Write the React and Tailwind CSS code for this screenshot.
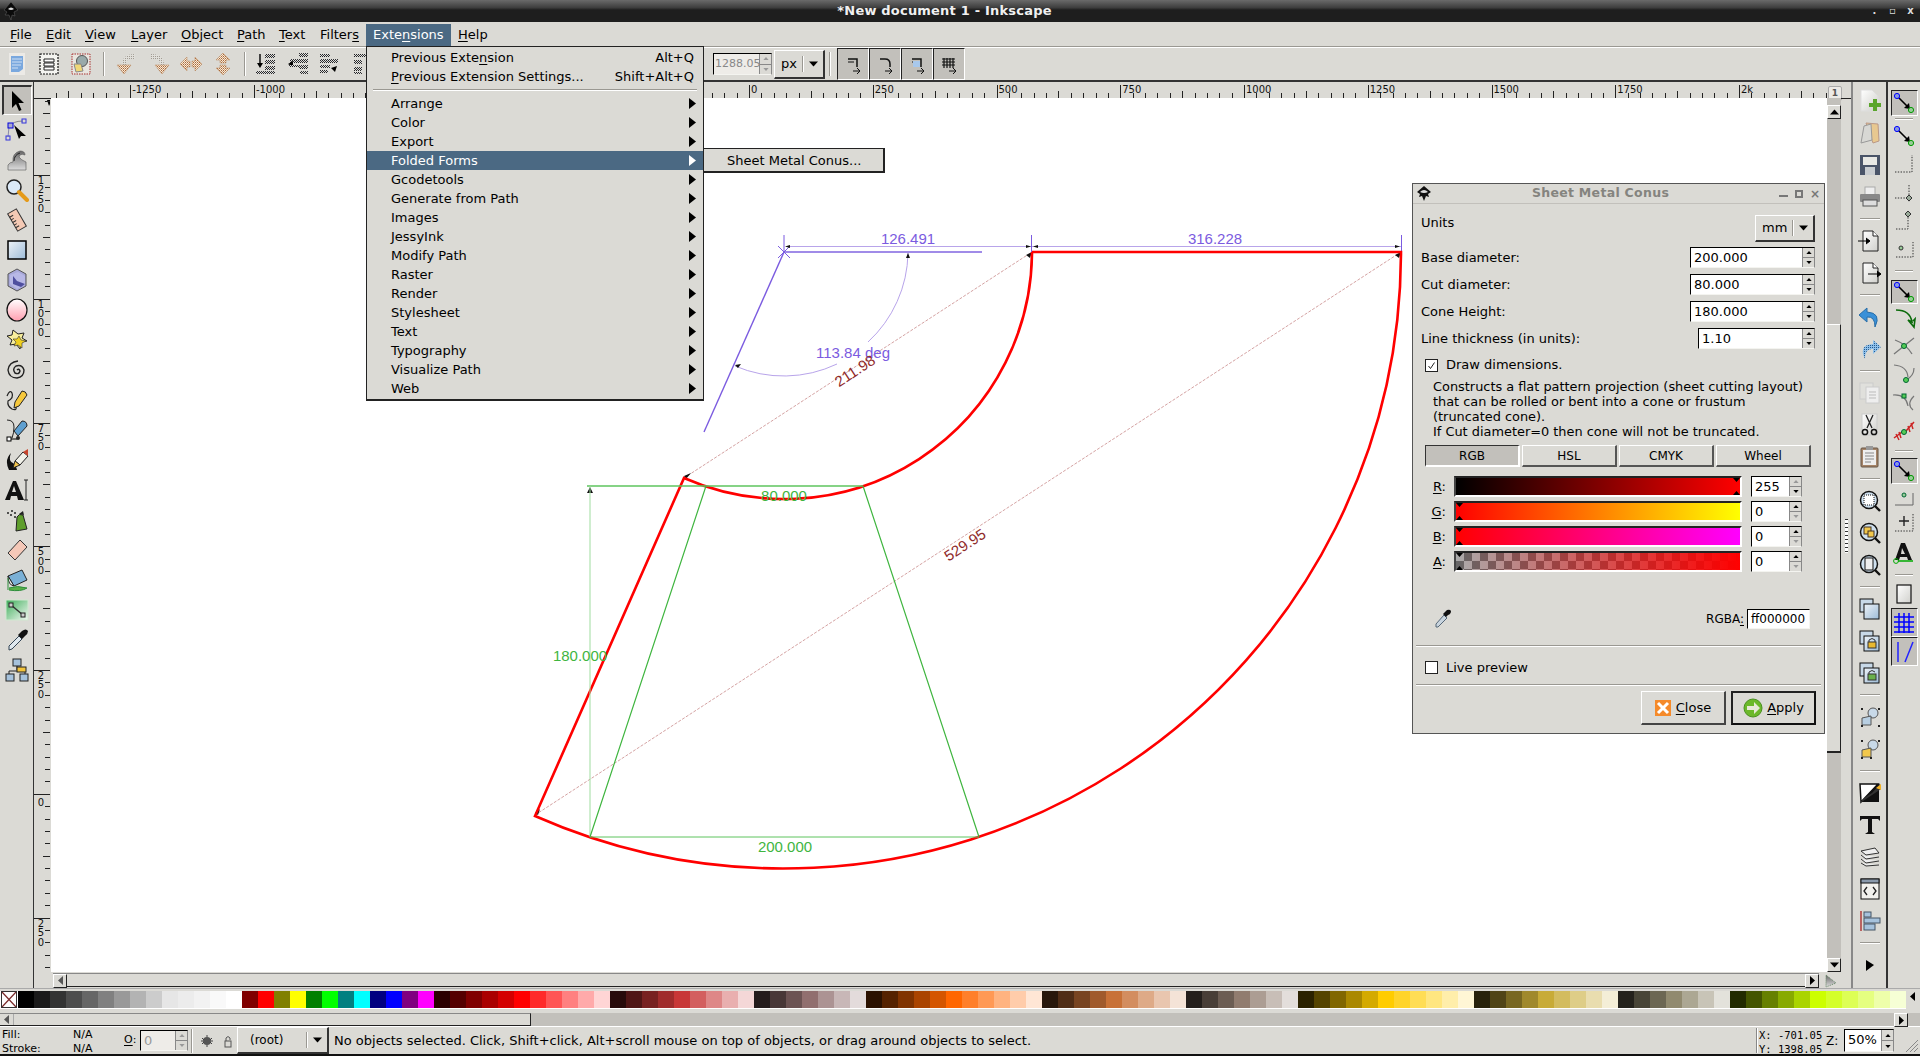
import React from "react";

const F = "font-['DejaVu_Sans',sans-serif]";
const I = ({ children, s = 24 }) => (
  <svg width={s} height={s} viewBox="0 0 24 24" className="block shrink-0">{children}</svg>
);

const Defs = () => (
  <svg className="absolute w-0 h-0">
    <defs>
      <linearGradient id="gBlue" x1="0" y1="0" x2="1" y2="1"><stop offset="0" stopColor="#eef3f8" /><stop offset="1" stopColor="#9dbcd8" /></linearGradient>
      <linearGradient id="gPink" x1="0" y1="0" x2="0" y2="1"><stop offset="0" stopColor="#fff" /><stop offset="1" stopColor="#ff9fb0" /></linearGradient>
      <linearGradient id="gGreen" x1="0" y1="0" x2="1" y2="1"><stop offset="0" stopColor="#3fae5b" /><stop offset="1" stopColor="#f2f8f2" /></linearGradient>
      <linearGradient id="gGray" x1="0" y1="0" x2="0" y2="1"><stop offset="0" stopColor="#666" /><stop offset="1" stopColor="#ddd" /></linearGradient>
      <linearGradient id="gPage" x1="0" y1="0" x2="1" y2="1"><stop offset="0" stopColor="#fff" /><stop offset="1" stopColor="#d0d0cc" /></linearGradient>
      <pattern id="hatch" width="2" height="2" patternUnits="userSpaceOnUse"><rect width="2" height="2" fill="#f7ead9" /><rect width="1" height="1" fill="#a9683a" /><rect x="1" y="1" width="1" height="1" fill="#c99a72" /></pattern>
      <pattern id="hatchG" width="2" height="2" patternUnits="userSpaceOnUse"><rect width="2" height="2" fill="#e0dfda" /><rect width="1" height="1" fill="#a09a92" /></pattern>
      <pattern id="hatchK" width="2" height="2" patternUnits="userSpaceOnUse"><rect width="2" height="2" fill="#ddd" /><rect width="1" height="1" fill="#222" /><rect x="1" y="1" width="1" height="1" fill="#333" /></pattern>
      <pattern id="hatchBlue" width="2" height="2" patternUnits="userSpaceOnUse"><rect width="2" height="2" fill="#8fc0ea" /><rect width="1" height="1" fill="#22598f" /></pattern>
    </defs>
  </svg>
);

const Arrow = () => <path d="M7 2 L7 19 L11 15 L14 22 L16.5 21 L13.5 14 L19 14 Z" fill="#000" />;

const tools = [
  <I><Arrow /></I>,
  <I><path d="M5 9 Q7 3 18 3" fill="none" stroke="#888" /><path d="M4 9 L3 19" stroke="#88a" /><path d="M9 7 L21 18 L16 18 L14 21 Z" fill="#000" /><rect x="3" y="5" width="5" height="5" fill="#aac" stroke="#00d" /><rect x="17" y="1" width="4" height="4" fill="none" stroke="#33d" /><rect x="1" y="18" width="4" height="4" fill="none" stroke="#33d" /></I>,
  <I><path d="M3 22 L3 17 Q5 14 8 14 Q7 5 15 3 Q20 3 20 7 Q15 5 14 9 Q16 12 21 14 L21 22 Z" fill="url(#gGray)" stroke="#555" strokeWidth=".6" /><path d="M9 13 Q9 7 15 5" fill="none" stroke="#222" /></I>,
  <I><circle cx="9" cy="9" r="7" fill="#dbe9f7" stroke="#222" strokeWidth="1.5" /><path d="M14 14 L22 22" stroke="#e59a18" strokeWidth="4" strokeLinecap="round" /></I>,
  <I><g transform="rotate(-30 12 12)"><rect x="7" y="2" width="10" height="20" fill="#f4c9b4" stroke="#333" /><path d="M7 6h4M7 9h3M7 12h4M7 15h3M7 18h4" stroke="#333" /></g></I>,
  <I><rect x="3" y="3" width="18" height="18" fill="url(#gBlue)" stroke="#000" strokeWidth="1.5" /></I>,
  <I><path d="M12 1 L21 6 L21 18 L12 23 L3 18 L3 6 Z" fill="#a8a8d8" stroke="#555" /><path d="M5 7 L13 4 L20 8 L20 17 L12 21 L5 16 Z" fill="#b8b8e6" /><path d="M8 8 L8 16 L16 19 L20 16 L12 13 Z" fill="#4f4f9f" /></I>,
  <I><ellipse cx="12" cy="12" rx="10" ry="11" fill="url(#gPink)" stroke="#111" strokeWidth="1.2" /></I>,
  <I><path d="M8 2 L13 6 L19 5 L17 10 L22 13 L16 14 L15 21 L11 16 L5 17 L7 12 L2 8 L7 7 Z" fill="#f8ee9c" stroke="#222" /><path d="M14 8 L16 12 L21 13 L17 15 L17 20 L13 17 L9 18 L11 14 L8 11 L12 11 Z" fill="#f0d020" stroke="#333" strokeWidth=".6" /></I>,
  <I><path d="M12 12 Q14 10 15 13 Q14 17 10 15 Q7 11 11 8 Q17 6 19 12 Q19 19 12 20 Q4 20 3 12 Q4 4 13 3" fill="none" stroke="#222" strokeWidth="1.4" /></I>,
  <I><path d="M10 14 L17 3 Q21 3 22 7 L14 18 L9 20 Z" fill="#f6c83c" stroke="#222" /><path d="M2 8 Q5 1 7 5 Q9 10 3 13 Q2 18 7 21 Q12 23 11 19" fill="none" stroke="#222" strokeWidth="1.2" /></I>,
  <I><path d="M2 2 Q9 2 9 9 Q9 15 7 20" fill="none" stroke="#222" /><path d="M9 13 L17 3 Q22 3 22 8 L13 18 Z" fill="#5e9fd0" stroke="#222" /><rect x="2" y="19" width="4" height="4" fill="#fff" stroke="#000" /><path d="M6 21 L12 21" stroke="#000" /><circle cx="13" cy="20" r="2" fill="#222" /></I>,
  <I><path d="M4 22 Q-1 12 6 5 Q3 13 8 15 Q11 17 12 22 Z" fill="#111" /><path d="M10 13 L18 4 L23 8 L15 17 Z" fill="#f2f2ea" stroke="#222" /><path d="M18 4 L23 1 L23 8 Z" fill="#c8442c" /><path d="M10 13 L8 20 L15 17 Z" fill="#f3c64e" stroke="#222" /></I>,
  <I><path d="M8 3 L11 3 L19 22 L13 22 L12 18 L6 18 L5 22 L0 22 Z M9 8 L7 14 L11 14 Z" fill="#111" fillRule="evenodd" /><path d="M19 2 L23 2 M21 2 L21 22 M19 22 L23 22" stroke="#222" /></I>,
  <I><path d="M12 9 Q14 5 18 7 L22 21 L11 23 Z" fill="#5f9e2c" stroke="#222" /><path d="M14 6 L18 3 L19 7 Z" fill="#222" /><circle cx="3" cy="5" r="1" fill="#222" /><circle cx="7" cy="3" r="1" fill="#222" /><circle cx="6" cy="7" r="1" fill="#222" /><circle cx="10" cy="5" r="1" fill="#222" /><circle cx="10" cy="9" r="1" fill="#222" /></I>,
  <I><path d="M3 15 L15 2 L22 9 L10 22 Z" fill="#f4c8b8" stroke="#333" /></I>,
  <I><path d="M3 8 L17 2 L22 12 L9 18 Z" fill="#7ab0d6" stroke="#222" /><path d="M3 8 L9 18 Q3 17 3 8" fill="#eee" stroke="#222" /><path d="M3 10 L3 22 M4 20 Q12 17 22 20 Q16 24 4 22" stroke="#2d8e3c" fill="#5ab048" /></I>,
  <I><rect x="1" y="2" width="22" height="20" fill="url(#gGreen)" stroke="#cfe8cf" /><path d="M6 7 L18 17" stroke="#333" strokeWidth="1.5" /><rect x="4" y="5" width="4" height="4" fill="#ccc" stroke="#222" /><rect x="16" y="15" width="4" height="4" fill="#ccc" stroke="#222" /></I>,
  <I><path d="M4 22 L4 18 L14 8 L17 11 L7 21 Z" fill="#dfe8ee" stroke="#345" /><path d="M13 7 L17 3 Q21 0 23 3 Q23 6 20 8 L17 11 Z" fill="#111" /></I>,
  <I><path d="M12 8 L12 12 M4 17 L4 13 L20 13 L20 17" stroke="#222" fill="none" /><rect x="8" y="1" width="8" height="7" fill="#a6c2dc" stroke="#222" /><rect x="12" y="9" width="9" height="5" fill="#f2c33c" stroke="#222" /><rect x="1" y="16" width="8" height="7" fill="#a6c2dc" stroke="#222" /><rect x="15" y="16" width="8" height="7" fill="#a6c2dc" stroke="#222" /></I>,
];

const SnapBase = () => (
  <>
    <path d="M6 6 L16 16" stroke="#000" strokeWidth="1.6" /><path d="M18 18 L12 17 L17 12 Z" fill="#000" />
    <circle cx="5" cy="5" r="2.6" fill="#8899dd" stroke="#00f" /><circle cx="19" cy="19" r="2.6" fill="#9c9" stroke="#090" />
  </>
);
const Dot = ({ d }) => <path d={d} fill="none" stroke="#333" strokeDasharray="1.4 1.4" />;
const s = {
  main: <I><SnapBase /></I>,
  bbox: <I><Dot d="M3 20 L20 20 L20 3" /></I>,
  edge: <I><Dot d="M3 18 L17 18 M17 5 L17 22" /><path d="M17 15 L20 18 L17 21 L14 18 Z" fill="#9a9" stroke="#333" /></I>,
  mid: <I><Dot d="M4 21 L16 21 L16 8" /><path d="M16 3 L19 6 L16 9 L13 6 Z" fill="#9a9" stroke="#333" /></I>,
  cen: <I><Dot d="M4 21 L21 21 L21 6" /><circle cx="9" cy="12" r="2" fill="#9c9" stroke="#333" /></I>,
  path: <I><path d="M4 4 Q18 4 20 16 L16 14 L22 21 L23 13 L21 15" fill="none" stroke="#0a6a0a" strokeWidth="1.6" /></I>,
  inter: <I><path d="M2 20 L22 4 M3 6 Q14 10 20 20" fill="none" stroke="#777" strokeWidth="1.3" /><circle cx="12" cy="12" r="2.5" fill="#5c5" stroke="#063" /></I>,
  cusp: <I><path d="M2 3 Q15 4 16 15 M22 6 Q22 14 14 18" fill="none" stroke="#777" strokeWidth="1.2" /><circle cx="14" cy="18" r="2.5" fill="#5c5" stroke="#063" /></I>,
  smooth: <I><path d="M1 5 Q14 4 16 16 M22 6 Q14 14 21 20" fill="none" stroke="#777" strokeWidth="1.2" /><rect x="10" y="4" width="4" height="4" fill="#5c5" stroke="#063" /></I>,
  mids: <I><path d="M2 20 L10 14 M14 13 L22 4" stroke="#c22" strokeWidth="1.5" /><path d="M4 16 L7 22 M7 14 L9 20 M16 8 L18 14 M19 5 L21 11" stroke="#c22" strokeWidth="1.4" /><circle cx="12" cy="14" r="2.5" fill="#5c5" stroke="#063" /></I>,
  obj: <I><path d="M3 20 L21 20 L21 8" stroke="#666" fill="none" /><circle cx="12" cy="10" r="2" fill="#9c9" stroke="#063" /></I>,
  rot: <I><Dot d="M3 20 L21 20 L21 3" /><path d="M12 5 L12 15 M7 10 L17 10" stroke="#222" strokeWidth="1.4" /></I>,
  txt: <I><path d="M9 2 L13 2 L20 19 L16 19 L15 16 L8 16 L7 19 L3 19 Z M10 7 L9 13 L13 13 Z" fill="#111" fillRule="evenodd" /><path d="M6 20 L21 20" stroke="#0a0" strokeWidth="1.5" /><circle cx="4" cy="20" r="2.4" fill="none" stroke="#0a0" /></I>,
  page: <I><rect x="5" y="3" width="14" height="18" fill="url(#gPage)" stroke="#111" strokeWidth="1.2" /></I>,
  grid: <I><path d="M7 2v20M12 2v20M17 2v20M2 6h20M2 11h20M2 16h20M2 21h20" stroke="#00f" strokeWidth="1.5" /></I>,
  guide: <I><path d="M6 2 L6 22 M13 22 L21 2" stroke="#22f" strokeWidth="1.5" /></I>,
};
const snaps = [
  [26, s.main, 1], [6], [28, s.main], [28, s.bbox], [28, s.edge], [28, s.mid], [28, s.cen], [18],
  [24, s.main, 1], [28, s.path], [28, s.inter], [28, s.cusp], [28, s.smooth], [28, s.mids], [14],
  [26, s.main, 1], [26, s.obj], [26, s.rot], [34, s.txt], [10], [28, s.page], [29, s.grid, 1], [29, s.guide, 1],
];

const Page = ({ children }) => <I><path d="M5 2 L15 2 L20 7 L20 22 L5 22 Z" fill="url(#gPage)" stroke="#222" /><path d="M15 2 L15 7 L20 7" fill="#fff" stroke="#222" />{children}</I>;
const ZoomI = ({ c }) => <I><circle cx="11" cy="11" r="8.5" fill="#cfe0ee" stroke="#111" strokeWidth="1.5" />{c}<path d="M17 17 L22 22" stroke="#111" strokeWidth="2.4" /></I>;
const Dup = ({ c }) => <I><rect x="2" y="2" width="13" height="13" fill="#c8d9e8" stroke="#111" /><rect x="6" y="7" width="15" height="15" fill="url(#gBlue)" stroke="#111" />{c}</I>;
const cmds = [
  <I><path d="M3 1 L14 1 L20 7 L20 22 L3 22 Z" fill="url(#gPage)" stroke="#ddd" /><path d="M16 11h4v4h4v4h-4v4h-4v-4h-4v-4h4z" fill="#5aa52c" transform="translate(-1 -1)" /></I>,
  <I><path d="M8 2 L20 3 L21 20 L15 22 Z" fill="#e8c890" stroke="#b98" /><path d="M6 5 L13 3 L14 19 L3 22 Z" fill="#d8d8d4" stroke="#999" /></I>,
  <I><rect x="2" y="2" width="20" height="20" fill="#4a5468" /><rect x="5" y="4" width="14" height="8" fill="#e8e8e4" /><rect x="7" y="14" width="10" height="8" fill="#c8ccd0" /></I>,
  <I><rect x="7" y="2" width="10" height="8" fill="#eee" stroke="#aaa" /><rect x="2" y="9" width="20" height="8" rx="1" fill="#888" /><rect x="5" y="15" width="14" height="6" fill="#ddd" stroke="#555" /></I>,
  "s",
  <Page><path d="M0 12 L11 12 M8 9 L12 12 L8 15" stroke="#000" fill="#000" /></Page>,
  <Page><path d="M10 13 L22 13 M19 10 L23 13 L19 16" stroke="#000" fill="#000" /></Page>,
  "s",
  <I><path d="M9 3 L1 10 L9 17 L9 12 Q17 11 17 22 Q24 8 9 7 Z" fill="#3a90d8" stroke="#2a6ea8" /></I>,
  <I><path d="M15 3 L23 10 L15 17 L15 12 Q7 11 7 22 Q0 8 15 7 Z" fill="url(#hatchBlue)" /></I>,
  "s",
  <I><rect x="2" y="2" width="13" height="16" fill="#e0e0dc" stroke="#ccc" /><rect x="8" y="6" width="13" height="16" fill="#eee" stroke="#ccc" /><path d="M11 11h7M11 14h7M11 17h7" stroke="#bbb" /></I>,
  <I><rect x="4" y="1" width="15" height="21" fill="url(#gPage)" stroke="#ccc" /><path d="M8 2 L14 15 M15 2 L9 15" stroke="#222" strokeWidth="1.3" /><circle cx="7" cy="19" r="2.6" fill="none" stroke="#111" strokeWidth="1.5" /><circle cx="16" cy="19" r="2.6" fill="none" stroke="#111" strokeWidth="1.5" /></I>,
  <I><rect x="3" y="3" width="17" height="19" rx="1" fill="#a58468" stroke="#654" /><rect x="5" y="5" width="13" height="15" fill="#eee" /><rect x="8" y="1" width="7" height="4" fill="#999" /><path d="M7 8h9M7 11h9M7 14h9M7 17h6" stroke="#888" /></I>,
  "s",
  <ZoomI c={<rect x="6" y="6" width="10" height="10" fill="#fff" stroke="#111" strokeDasharray="1 1" />} />,
  <ZoomI c={<><rect x="6" y="6" width="7" height="7" fill="#f2c84c" stroke="#432" /><rect x="10" y="10" width="6" height="6" fill="#f2c84c" stroke="#432" /></>} />,
  <ZoomI c={<rect x="7" y="5" width="8" height="12" fill="#eee" stroke="#111" />} />,
  "s",
  <Dup />,
  <Dup c={<><path d="M11 13 V11 Q14 8 17 11 V13" fill="none" stroke="#333" /><rect x="10" y="13" width="8" height="6" fill="#e8b830" stroke="#333" /></>} />,
  <Dup c={<><path d="M11 13 V11 Q14 8 17 11" fill="none" stroke="#333" /><rect x="10" y="13" width="8" height="6" fill="#6ab04c" stroke="#333" /></>} />,
  "s",
  <I><circle cx="15" cy="8" r="5" fill="#c8d9e8" stroke="#555" /><path d="M4 13 L13 11 L13 20 L4 20 Z" fill="#b8cfe2" stroke="#555" /><g fill="#222"><rect x="3" y="3" width="2" height="2" /><rect x="20" y="3" width="2" height="2" /><rect x="3" y="20" width="2" height="2" /><rect x="20" y="20" width="2" height="2" /></g></I>,
  <I><circle cx="15" cy="8" r="5" fill="#c8d9e8" stroke="#555" /><path d="M4 13 L13 11 L13 20 L4 20 Z" fill="#f2c84c" stroke="#555" /><g fill="#222"><rect x="3" y="3" width="2" height="2" /><rect x="20" y="3" width="2" height="2" /><rect x="3" y="20" width="2" height="2" /><rect x="12" y="20" width="2" height="2" /></g></I>,
  "s",
  <I><path d="M2 3 L20 3 L3 21 Z" fill="#fff" stroke="#111" strokeWidth="1.5" /><path d="M22 3 L20 3 L3 21 L21 21 L21 4 Z" fill="#111" /><path d="M2 22 Q6 16 14 12 L22 3 L23 8 Z" fill="#333" /><path d="M18 7 L23 3 L23 9 Z" fill="#f2b020" /></I>,
  <I><path d="M2 3 L22 3 L22 8 L20 6 L14 6 L14 19 L17 21 L7 21 L10 19 L10 6 L4 6 L2 8 Z" fill="#111" /></I>,
  <I><path d="M3 6 L17 3 L21 8 L8 10 Z M3 10 L8 14 L21 12 M3 14 L8 18 L21 16 M3 18 L8 21 L21 20" fill="#eee" stroke="#333" /></I>,
  <I><rect x="3" y="2" width="18" height="20" fill="#f2f2ee" stroke="#111" /><rect x="3" y="2" width="18" height="4" fill="#8a9aac" stroke="#111" /><path d="M9 10 L6 14 L9 18 M15 10 L18 14 L15 18" fill="none" stroke="#222" strokeWidth="1.3" /></I>,
  <I><path d="M3 2 L3 22" stroke="#a82222" strokeWidth="1.3" /><rect x="6" y="3" width="7" height="5" fill="#a6c2dc" stroke="#456" /><rect x="6" y="9" width="16" height="5" fill="#a6c2dc" stroke="#456" /><rect x="6" y="15" width="11" height="6" fill="#a6c2dc" stroke="#456" /></I>,
  "s",
  <I><path d="M8 7 L16 12 L8 18 Z" fill="#000" /></I>,
];

const Hatch = ({ d, g }) => <I>{g && <path d={g} fill="url(#hatchG)" />}<path d={d} fill="url(#hatch)" stroke="#b98a62" strokeWidth=".5" /></I>;
const Snap4 = ({ c }) => <I><path d="M7 7h9v8" fill="none" stroke="#111" strokeWidth="1.5" /><path d="M7 10h6M12 19h7M16 16 L19 19 L16 22" stroke="#111" fill="none" />{c}</I>;

const Sep = () => <div className="w-[2px] h-[24px] border-l border-l-[#9a9892] border-r border-r-white shrink-0" />;
const TB = ({ children }) => <div className="w-[32px] h-[33px] flex items-center justify-center shrink-0">{children}</div>;
const Caret = ({ c = "#000", up = false, s = 7 }) => (
  <svg width={s} height={s - 3} viewBox="0 0 7 4" className="block"><path d={up ? "M0 4 L3.5 0 L7 4 Z" : "M0 0 L7 0 L3.5 4 Z"} fill={c} /></svg>
);
const Tri = ({ c = "#000" }) => <svg width="7" height="11" viewBox="0 0 7 11" className="block"><path d="M0 0 L7 5.5 L0 11 Z" fill={c} /></svg>;

const Spin = ({ value, w, h = "h-[21px]", dimUp, dimDown, bg = "bg-white", tc = "text-black", cls = "text-[13px]", pl = "pl-[3px]" }) => (
  <div className={`flex ${h} border-t border-l border-t-black border-l-black border-b border-b-[#f4f4f0] border-r border-r-[#888] ${bg} overflow-hidden shrink-0`} style={{ width: w }}>
    <div className={`flex-1 min-w-0 ${pl} leading-[19px] whitespace-nowrap ${cls} ${tc}`}>{value}</div>
    <div className="w-[12px] bg-[#dbdad5] border-l border-l-[#888] flex flex-col shrink-0">
      <div className="flex-1 flex items-center justify-center border-b border-b-[#888]"><Caret up s={6} c={dimUp ? "#999" : "#000"} /></div>
      <div className="flex-1 flex items-center justify-center"><Caret s={6} c={dimDown ? "#999" : "#000"} /></div>
    </div>
  </div>
);

const Combo = ({ text, cls }) => (
  <div className={`flex items-center border-t border-l border-t-white border-l-white border-b-2 border-r-2 border-b-[#333] border-r-[#333] bg-[#dbdad5] ${cls}`}>
    <span className="flex-1 pl-[6px] whitespace-nowrap">{text}</span>
    <span className="w-[2px] h-[16px] border-l border-l-[#9a9892] border-r border-r-white" />
    <span className="px-[5px]"><Caret s={9} /></span>
  </div>
);

const U = ({ children }) => <u className="underline underline-offset-2">{children}</u>;

const Title = () => (
  <div className="h-[22px] shrink-0 bg-[linear-gradient(#6a6a6a_0,#3d3d3d_35%,#1e1e1e_45%,#1e1e1e_100%)] flex items-center relative px-[3px]">
    <svg width="16" height="18" viewBox="0 0 16 18" className="block"><path d="M8 0 L15 8 L11 10 L12 14 L9 13 L8 18 L6 13 L2 13 L4 10 L1 8 Z" fill="#0a0a0a" stroke="#666" strokeWidth=".5" /><path d="M5 7 Q8 4 11 7 Q8 9 5 7" fill="#ddd" /></svg>
    <span className="flex-1 text-center text-[13px] font-bold text-[#f0f0f0] tracking-[0.2px] leading-[20px]">*New document 1 - Inkscape</span>
    <span className="flex items-center gap-[9px] pr-[2px] text-[#ddd] text-[10px] font-bold leading-none">
      <span className="w-[9px] text-center">.</span>
      <span className="w-[9px] text-center">▫</span>
      <span className="w-[9px] text-center">x</span>
    </span>
  </div>
);

const menus = [
  ["F", "ile", 36], ["E", "dit", 39], ["V", "iew", 46], ["L", "ayer", 50], ["O", "bject", 56], ["P", "ath", 42], ["T", "ext", 41],
];
const MenuBar = () => (
  <div className="h-[25px] shrink-0 bg-[#dbdad5] flex items-center text-[13px] text-black border-b border-b-[#9a9892] pt-[2px]">
    <div className="w-[10px]" />
    {menus.map(([a, b, w]) => <div key={b} style={{ width: w }}><U>{a}</U>{b}</div>)}
    <div className="w-[46px]">Filter<U>s</U></div>
    <div className="w-[85px] h-[22px] bg-[#4b6983] text-white pl-[7px] leading-[22px]">Exte<U>n</U>sions</div>
    <div className="pl-[7px]"><U>H</U>elp</div>
  </div>
);

const AlignA = () => <I><path d="M6 2 L6 14" stroke="#000" strokeWidth="1.4" /><path d="M3 11 L6 16 L9 11 Z" /><path d="M11 2h10v4H11z M11 8h10v4H11z M11 14h10v4H11z M2 19h19v3H2z" fill="url(#hatchK)" /></I>;
const AlignB = () => <I><path d="M13 1h9v4h-9z M4 7h18v4H4z M13 13h9v4h-9z M14 19h8v3h-8z" fill="url(#hatchK)" /><path d="M2 12 L7 9 L7 15 Z" /><path d="M3 13h12v2H3z" fill="url(#hatchK)" /></I>;
const AlignC = () => <I><path d="M2 2h10v3H2z M2 7h18v4H2z M2 13h10v3H2z M2 18h8v3H2z" fill="url(#hatchK)" /><path d="M13 16 L19 14 L17 20 Z" /></I>;
const AlignD = () => <I><path d="M4 2h16v3H4z M4 8h8v4H4z M4 15h8v4H4z M4 20h8v2H4z" fill="url(#hatchK)" /></I>;

const Toolbar = () => (
  <div className="h-[35px] shrink-0 bg-[#dbdad5] flex items-center border-t border-t-white border-b-2 border-b-[#333] pr-[4px]">
    <div className="w-[1px]" />
    <TB><I><path d="M4 1h16v22H4z" fill="#eceae6" /><path d="M6 4h12v13l-4 3H6z" fill="#7aa8de" /><path d="M7 7h10M7 10h10M7 13h9M7 16h6" stroke="#cfe0f4" /></I></TB>
    <TB><I><rect x="3" y="2" width="18" height="20" fill="#f4f4f0" stroke="#111" strokeDasharray="2 1" strokeWidth="1.2" /><path d="M7 7h10v3H7z M7 11h10v3H7z M7 15h10v3H7z" fill="#fff" stroke="#222" /></I></TB>
    <TB><I><rect x="3" y="2" width="18" height="20" fill="#e8e6e0" stroke="#a33" strokeDasharray="1.5 1" /><circle cx="13" cy="9" r="5.5" fill="#9aa" stroke="#555" /><path d="M5 12 L12 12 L14 19 L7 20 Z" fill="#f0d878" stroke="#888" /></I></TB>
    <div className="w-[14px] flex justify-center"><Sep /></div>
    <TB><Hatch g="M20 2 L20 7 L14 7 Q11 8 11 13 L7 13 Q7 2 20 2 Z" d="M2 13 L16 13 L9 22 Z" /></TB>
    <TB><Hatch g="M4 2 L4 7 L10 7 Q13 8 13 13 L17 13 Q17 2 4 2 Z" d="M8 13 L22 13 L15 22 Z" /></TB>
    <TB><Hatch d="M1 12 L8 5 L8 9 L11 9 L11 15 L8 15 L8 19 Z M23 12 L16 5 L16 9 L13 9 L13 15 L16 15 L16 19 Z" /></TB>
    <TB><Hatch d="M12 1 L19 8 L15 8 L15 11 L9 11 L9 8 L5 8 Z M12 23 L19 16 L15 16 L15 13 L9 13 L9 16 L5 16 Z" /></TB>
    <div className="w-[11px] flex justify-center"><Sep /></div>
    <TB><AlignA /></TB>
    <TB><AlignB /></TB>
    <TB><AlignC /></TB>
    <TB><AlignD /></TB>
    <div className="w-[335px]" />
    <Spin value="1288.05" w={59} h="h-[22px]" bg="bg-[#eeece8]" tc="text-[#888]" cls="text-[11px]" pl="pl-[1px]" dimUp dimDown />
    <div className="w-[2px]" />
    <Combo text="px" cls="w-[51px] h-[29px] text-[13px]" />
    <div className="w-[4px]" />
    <Sep />
    <div className="w-[6px]" />
    {[
      <Snap4 />,
      <I><path d="M7 7h5 Q17 7 17 12 V15" fill="none" stroke="#111" strokeWidth="1.5" /><path d="M12 19h7M16 16 L19 19 L16 22" stroke="#111" fill="none" /></I>,
      <Snap4 c={<path d="M8 9h7v6H8z" fill="#a8c8ec" />} />,
      <I><path d="M7 6v10M10 6v10M13 6v10M16 6v10M5 7h13M5 10h13M5 13h13" stroke="#111" strokeWidth="1.2" /><path d="M12 19h7M16 16 L19 19 L16 22" stroke="#111" fill="none" /></I>,
    ].map((ic, i) => (
      <div key={i} className="w-[32px] h-[32px] flex items-center justify-center bg-[#c2c0bb] border-t border-l border-t-[#222] border-l-[#222] border-b border-r border-b-white border-r-white">{ic}</div>
    ))}
  </div>
);

const HRuler = () => {
  const t = [];
  for (let i = -60; i < 180; i++) {
    const x = 749 - 51 + i * 12.375 + 0;
    if (x < 0 || x > 1776) continue;
    const main = i % 10 === 0, mid = i % 5 === 0;
    t.push(<line key={i} x1={Math.round(x) + 0.5} x2={Math.round(x) + 0.5} y1={main ? 3 : mid ? 9 : 11} y2={16} stroke="#222" />);
  }
  const labels = [];
  [-1250, -1000, -750, -500, -250, 0, 250, 500, 750, 1000, 1250, 1500, 1750, "2k"].forEach((v, i) =>
    labels.push(<text key={i} x={749 - 51 + (i - 5) * 123.75 + 2} y={11} fontSize="10" fontFamily="DejaVu Sans" fill="#111">{v}</text>)
  );
  return <svg width="1776" height="16" viewBox="0 0 1776 16" className="block">{t}{labels}</svg>;
};
const VRuler = () => {
  const t = [];
  for (let i = -8; i < 70; i++) {
    const y = 175 - 98 + i * 12.375;
    if (y < 0 || y > 874) continue;
    const main = i % 10 === 0, mid = i % 5 === 0;
    t.push(<line key={i} y1={Math.round(y) + 0.5} y2={Math.round(y) + 0.5} x1={main ? 0 : mid ? 9 : 11} x2={16} stroke="#222" />);
  }
  const labels = [];
  [1250, 1000, 750, 500, 250].forEach((v, i) => {
    String(v).split("").forEach((d, j) => labels.push(
      <text key={v + "-" + j} x={7} y={175 - 98 + i * 123.75 + 9 + j * 9.3} fontSize="10" textAnchor="middle" fontFamily="DejaVu Sans" fill="#111">{d}</text>
    ));
  });
  labels.push(<text key="z" x={7} y={797 - 98 + 9} fontSize="10" textAnchor="middle" fontFamily="DejaVu Sans" fill="#111">0</text>);
  [0, 1, 2].forEach(j => labels.push(<text key={"l" + j} x={7} y={918 - 98 + 9 + j * 9.3} fontSize="10" textAnchor="middle" fontFamily="DejaVu Sans" fill="#111">{"250"[j]}</text>));
  return <svg width="16" height="874" viewBox="0 0 16 874" className="block"><path d="M13 2 L18 2 L15 8 Z" fill="#000" />{t}{labels}</svg>;
};

const Drawing = () => {
  const purple = "#7b5be0", lpurple = "#b8a4ea", green = "#3fb53f", red = "#ff0000", dred = "#8f2a2a";
  const T = (p) => <text fontFamily="Liberation Sans" fontSize="15" textAnchor="middle" {...p} />;
  return (
    <svg width="1776" height="874" viewBox="51 98 1776 874" className="block bg-white">
      <path d="M684 478 L1032 252 M535 815 L1401 252" stroke="#c98a8a" strokeWidth=".8" strokeDasharray="3 1.5" fill="none" />
      <path d="M787 246.5 L1401 246.5" stroke={lpurple} strokeWidth="1" fill="none" />
      <path d="M784 252 L982 252" stroke="#a08be8" strokeWidth="2" />
      <path d="M784 235 L784 252 M778 246 L790 258 M778 258 L790 246 M1031.5 235 L1031.5 252 M1401.5 235 L1401.5 252" stroke={purple} strokeWidth="1" />
      <path d="M784 252 L704 432" stroke={purple} strokeWidth="1.4" />
      <path d="M908 253 A124 124 0 0 1 868 342" stroke={lpurple} fill="none" />
      <path d="M837 364 A124 124 0 0 1 735 366" stroke={lpurple} fill="none" />
      <path d="M790 245 L790 248 L785 246.5 Z M1026 245 L1026 248 L1031 246.5 Z M1038 245 L1038 248 L1033 246.5 Z M1395 245 L1395 248 L1400 246.5 Z M906 258 L910 258 L908 253 Z M741 364 L738 368 L735 365 Z M587 493 L593 493 L590 487 Z M691 473 L686 479 L684 476 Z M540 809 L538 815 L535 813 Z M1026 255 L1030 258 L1032 252 Z M1395 255 L1399 258 L1401 252 Z" fill="#111" />
      <path d="M1032 252 L1401 252 A617 617 0 0 1 535 816 L684 478 A248 248 0 0 0 1032 252" fill="none" stroke={red} strokeWidth="2.6" strokeLinejoin="miter" />
      <path d="M587 486 L863 486" stroke="#5ec45e" strokeWidth="1.6" />
      <path d="M590 837 L979 837" stroke="#5ec45e" strokeWidth="1" />
      <path d="M590 486 L590 837" stroke="#9fdc9f" strokeWidth="1" />
      <path d="M706 486 L590 837 M863 486 L979 837" stroke={green} strokeWidth="1.2" fill="none" />
      <T x="908" y="244" fill={purple}>126.491</T>
      <T x="1215" y="244" fill={purple}>316.228</T>
      <T x="853" y="358" fill={purple}>113.84 deg</T>
      <T x="855" y="376" fill={dred} transform="rotate(-33 855 371)">211.98</T>
      <T x="965" y="550" fill={dred} transform="rotate(-33 965 545)">529.95</T>
      <T x="784" y="501" fill={green}>80.000</T>
      <T x="580" y="661" fill={green}>180.000</T>
      <T x="785" y="852" fill={green}>200.000</T>
    </svg>
  );
};

const SBtn = ({ children, cls = "" }) => (
  <div className={`w-[14px] h-[14px] flex items-center justify-center bg-[#dbdad5] border-t border-l border-t-white border-l-white border-b border-r border-b-[#222] border-r-[#222] shrink-0 ${cls}`}>{children}</div>
);
const TriL = ({ c = "#555" }) => <svg width="5" height="9" viewBox="0 0 5 9" className="block"><path d="M5 0 L0 4.5 L5 9 Z" fill={c} /></svg>;
const TriR = () => <svg width="5" height="9" viewBox="0 0 5 9" className="block"><path d="M0 0 L5 4.5 L0 9 Z" fill="#000" /></svg>;

const Main = () => (
  <div className="flex h-[906px] shrink-0">
    <div className="w-[34px] shrink-0 border-r border-r-[#333] pt-[3px] flex flex-col items-center bg-[#dbdad5]">
      {tools.map((ic, i) => (
        <div key={i} className={`w-[30px] h-[30px] flex items-center justify-center ${i === 0 ? "bg-[#c2c0bb] border-t-2 border-l-2 border-t-[#333] border-l-[#333] border-b border-r border-b-white border-r-white" : ""}`}>{ic}</div>
      ))}
    </div>
    <div className="w-[1817px] shrink-0 flex flex-col">
      <div className="flex flex-col h-[890px]">
        <div className="flex h-[16px] items-stretch">
          <div className="w-[17px]" />
          <HRuler />
          <div className="flex-1 flex justify-start pl-[1px] pt-[4px]">
            <div className="w-[14px] h-[15px] bg-[#eceae6] border border-[#aaa] rounded-[2px] text-[9px] leading-[13px] text-center text-[#555] font-bold">1</div>
          </div>
        </div>
        <div className="flex flex-1 min-h-0 border-t border-t-[#222]">
          <div className="w-[17px] shrink-0 -mt-px"><VRuler /></div>
          <div className="-mt-px"><Drawing /></div>
          <div className="w-[14px] ml-[0px] flex flex-col bg-[#c2c0bb] -mt-px pt-[7px] h-[874px]">
            <SBtn><Caret s={9} up /></SBtn>
            <div className="h-[205px]" />
            <div className="h-[429px] bg-[#dbdad5] border-t border-t-white border-b-2 border-b-[#222] border-r border-r-[#222]" />
            <div className="flex-1" />
            <SBtn><Caret s={9} /></SBtn>
          </div>
          <div className="flex-1 flex flex-col items-center pt-[421px] -mt-px">
            <div className="w-[3px] h-[34px] bg-[repeating-linear-gradient(#333_0,#333_1px,#fff_1px,#fff_4px)]" />
          </div>
        </div>
      </div>
      <div className="flex h-[15px] items-center">
        <div className="w-[19px]" />
        <div className="w-[1766px] h-[14px] flex bg-[#dbdad5] border-t border-t-[#888] border-b border-b-[#222]">
          <SBtn><TriL /></SBtn>
          <div className="flex-1" />
          <SBtn><TriR /></SBtn>
        </div>
        <div className="pl-[6px] pt-[2px]">
          <svg width="12" height="14" viewBox="0 0 12 14" className="block"><path d="M1 1 L11 9 L1 13 Z" fill="url(#gGray)" stroke="#6a8a6a" strokeDasharray="1 1" /></svg>
        </div>
      </div>
    </div>
    <div className="w-[37px] shrink-0 border-l-2 border-l-[#888] border-r-2 border-r-[#333] flex flex-col items-center pt-[3px]">
      {cmds.map((c, i) => c === "s"
        ? <div key={i} className="h-[12px] w-[20px] flex items-center"><div className="w-full h-[2px] border-t border-t-[#9a9892] border-b border-b-white" /></div>
        : <div key={i} className="h-[32px] w-[32px] flex items-center justify-center">{c}</div>)}
    </div>
    <div className="flex-1 flex flex-col items-center pt-[8px]">
      {snaps.map(([h, ic, active], i) => ic
        ? <div key={i} className={`w-[27px] flex items-center justify-center ${active ? "bg-[#c2c0bb] border-t border-l border-t-[#222] border-l-[#222] border-b border-r border-b-white border-r-white" : ""}`} style={{ height: h }}>{ic}</div>
        : <div key={i} className="w-[18px] flex items-center" style={{ height: h }}><div className="w-full h-[2px] border-t border-t-[#9a9892] border-b border-b-white" /></div>)}
    </div>
  </div>
);

const palette = "000000 1a1a1a 333333 4d4d4d 666666 808080 999999 b3b3b3 cccccc e6e6e6 ececec f2f2f2 f9f9f9 ffffff 800000 ff0000 808000 ffff00 008000 00ff00 008080 00ffff 000080 0000ff 800080 ff00ff 2b0000 550000 800000 aa0000 d40000 ff0000 ff2a2a ff5555 ff8080 ffaaaa ffd5d5 280b0b 501616 782121 a02c2c c83737 d35f5f de8787 e9afaf f4d7d7 241c1c 483737 6c5353 916f6f ac9393 c8b7b7 e3dbdb 2b1100 552200 803300 aa4400 d45500 ff6600 ff7f2a ff9955 ffb380 ffccaa ffe6d5 28170b 502d16 784421 a05a2c c87137 d38d5f deaa87 e9c6af f4e3d7 241f1c 483e37 6c5d53 917c6f ac9d93 c8beb7 e3dedb 2b2200 554400 806600 aa8800 d4aa00 ffcc00 ffd42a ffdd55 ffe680 ffeeaa fff6d5 28220b 504416 786721 a0892c c8ab37 d3bc5f decd87 e9ddaf f4eed7 24221c 484537 6c6753 918a6f aca793 c8c4b7 e3e2db 222b00 445500 668000 88aa00 aad400 ccff00 d4ff2a ddff55 e5ff80 eeffaa f6ffd5".split(" ");

const Palette = () => (
  <div className="h-[25px] shrink-0 flex pt-[2px] border-t border-t-[#aaa] bg-[#dbdad5]">
    <div className="flex h-[18px] border-b border-b-white">
      <svg width="18" height="17" viewBox="0 0 18 17" className="block"><rect width="18" height="17" fill="#fff" /><path d="M2 1 L16 16 M16 1 L2 16" stroke="#7a2a2a" strokeWidth="1.2" /><rect x="1.5" y=".5" width="15" height="16" fill="none" stroke="#333" /></svg>
      {palette.map((c, i) => <div key={i} className="w-[16px] h-[17px]" style={{ background: "#" + c }} />)}
    </div>
    <div className="pl-[4px] pt-[1px]"><TriL c="#000" /></div>
  </div>
);

const PalScroll = () => (
  <div className="h-[14px] shrink-0 flex bg-[#c2c0bb] border-b border-b-white">
    <div className="w-[531px] flex bg-[#dbdad5] border-r border-r-[#222] border-b border-b-[#222] border-t border-t-[#888]">
      <div className="w-[14px] flex items-center justify-center border-r border-r-[#aaa]"><TriL /></div>
    </div>
    <div className="w-[1363px]" />
    <SBtn><TriR /></SBtn>
  </div>
);

const Status = () => (
  <div className="h-[29px] shrink-0 flex items-stretch bg-[#dbdad5] text-black border-b-2 border-b-[#111] text-[13px] relative">
    <div className="w-[73px] pl-[2px] pt-[1px] text-[11px] leading-[14px]"><div>Fill:</div><div>Stroke:</div></div>
    <div className="w-[51px] pt-[1px] text-[11px] leading-[14px]"><div>N/A</div><div>N/A</div></div>
    <div className="w-[16px] text-[11px] flex items-center"><U>O</U>:</div>
    <div className="flex items-center"><Spin value="0" w={48} h="h-[21px]" bg="bg-[#eeece8]" tc="text-[#999]" dimUp dimDown /></div>
    <div className="w-[8px] flex justify-center items-center"><Sep /></div>
    <div className="w-[22px] flex items-center justify-center">
      <svg width="14" height="14" viewBox="0 0 14 14" className="block"><circle cx="7" cy="7" r="4" fill="#555" /><path d="M2 4 L4 6 M12 4 L10 6 M7 1 V3 M2 10 L4 8 M12 10 L10 8 M1 7 H3 M11 7 H13 M7 11 V13" stroke="#444" /></svg>
    </div>
    <div className="w-[19px] flex items-center justify-center">
      <svg width="10" height="14" viewBox="0 0 10 14" className="block"><path d="M3 7 V4 Q5 1 7 4 V6" fill="none" stroke="#555" /><rect x="2" y="7" width="6" height="6" fill="none" stroke="#555" /></svg>
    </div>
    <div className="flex items-center">
      <Combo text="(root)" cls="w-[92px] h-[27px] text-[12px] [&>span:first-child]:pl-[12px]" />
    </div>
    <div className="pl-[5px] flex items-center whitespace-nowrap w-[1427px]">No objects selected. Click, Shift+click, Alt+scroll mouse on top of objects, or drag around objects to select.</div>
    <div className="w-[2px] my-[1px] border-l border-l-[#888] border-r border-r-white" />
    <div className="w-[68px] pl-[1px] text-[10.5px] leading-[14px] pt-[1px] whitespace-nowrap font-['DejaVu_Sans_Mono',monospace]"><div>X: -701.05</div><div>Y: 1398.05</div></div>
    <div className="w-[18px] text-[12px] flex items-center">Z:</div>
    <div className="flex items-center"><Spin value="50%" w={50} h="h-[23px]" /></div>
    <svg width="16" height="16" viewBox="0 0 16 16" className="block absolute right-[1px] bottom-[1px]"><path d="M15 3 L3 15 M15 7 L7 15 M15 11 L11 15" stroke="#888" /></svg>
  </div>
);

const items = ["Arrange", "Color", "Export", "Folded Forms", "Gcodetools", "Generate from Path", "Images", "JessyInk", "Modify Path", "Raster", "Render", "Stylesheet", "Text", "Typography", "Visualize Path", "Web"];

const Menu = () => (
  <div className="absolute left-[366px] top-[46px] w-[338px] h-[355px] bg-[#dbdad5] border border-[#222] border-b-2 pt-[1px] text-[13px] text-black">
    <div className="h-[19px] flex items-center justify-between pl-[24px] pr-[9px] leading-[19px]"><span>Previous Exte<U>n</U>sion</span><span>Alt+Q</span></div>
    <div className="h-[19px] flex items-center justify-between pl-[24px] pr-[9px] leading-[19px]"><span><U>P</U>revious Extension Settings...</span><span>Shift+Alt+Q</span></div>
    <div className="h-[8px] flex items-start px-[6px] pt-[3px]"><div className="w-full h-[2px] border-t border-t-[#9a9892] border-b border-b-white" /></div>
    {items.map((t) => {
      const on = t === "Folded Forms";
      return (
        <div key={t} className={`h-[19px] flex items-center justify-between pl-[24px] pr-[7px] ${on ? "bg-[#4b6983] text-white" : ""}`}>
          <span>{t}</span><Tri c={on ? "#fff" : "#000"} />
        </div>
      );
    })}
  </div>
);
const Submenu = () => (
  <div className="absolute left-[703px] top-[148px] w-[182px] h-[25px] bg-[#dbdad5] border border-[#222] border-b-2 border-r-2 pl-[23px] text-[13px] leading-[23px] text-black whitespace-nowrap">Sheet Metal Conus...</div>
);

const DRow = ({ label, value, w, mt = "mt-[6px]" }) => (
  <div className={`flex justify-between items-center h-[21px] pr-[9px] ${mt}`}>
    <span>{label}</span><Spin value={value} w={w} />
  </div>
);
const Tab = ({ children, on }) => (
  <div className={`w-[95px] h-[22px] text-[12px] leading-[20px] text-center border-t border-l border-t-white border-l-white border-b-2 border-r-2 border-b-[#555] border-r-[#555] ${on ? "bg-[#c2c0bb] !border-t-[#333] !border-l-[#333] !border-b-white !border-r-white" : ""}`}>{children}</div>
);
const Mark = ({ side }) => (
  <span className={`absolute top-0 bottom-0 w-[7px] flex flex-col justify-between items-center ${side}`}>
    <Caret s={7} /><Caret s={7} up />
  </span>
);
const CRow = ({ l, rest, bar, val, markSide, dimUp, dimDown }) => (
  <div className="flex h-[21px] items-center">
    <div className="w-[22px] text-right"><U>{l}</U>{rest}</div>
    <div className="w-[8px]" />
    <div className="relative w-[288px] h-[21px] border-t-2 border-l-2 border-t-[#222] border-l-[#444] border-b-2 border-b-white border-r-2 border-r-white overflow-hidden">
      {bar}
      <Mark side={markSide} />
    </div>
    <div className="w-[9px]" />
    <Spin value={val} w={51} dimUp={dimUp} dimDown={dimDown} />
  </div>
);

const Check = ({ on }) => (
  <div className="w-[13px] h-[13px] bg-white border border-[#222] flex items-center justify-center shrink-0">
    {on && <svg width="9" height="9" viewBox="0 0 9 9" className="block"><path d="M1.5 5 L3.5 7.5 L7.5 1.5" fill="none" stroke="#222" strokeWidth="1" /></svg>}
  </div>
);
const DSep = () => <div className="h-[2px] mx-[3px] border-t border-t-[#9a9892] border-b border-b-white" />;

const Dialog = () => (
  <div className="absolute left-[1412px] top-[183px] w-[413px] h-[551px] bg-[#dbdad5] border border-[#555] text-[13px] text-black flex flex-col">
    <div className="h-[20px] shrink-0 flex items-center relative border-b border-b-[#c2c0bb] pl-[3px]">
      <svg width="16" height="15" viewBox="0 0 16 15" className="block"><path d="M8 0 L15 6 L12 8 L13 11 L10 10 L8 15 L6 10 L3 11 L4 8 L1 6 Z" fill="#111" /><path d="M4 6 Q8 2 12 6 Q8 8 4 6" fill="#ddd" /></svg>
      <span className="flex-1 text-center text-[12.5px] font-bold text-[#85847f] tracking-[0.3px] pr-[10px]">Sheet Metal Conus</span>
      <span className="flex items-center gap-[7px] pr-[5px]">
        <span className="w-[9px] h-[2px] bg-[#777] mt-[5px]" />
        <span className="w-[8px] h-[8px] border-2 border-[#777]" />
        <span className="text-[#777] text-[12px] leading-none font-bold w-[9px]">×</span>
      </span>
    </div>
    <div className="pl-[8px] pt-[11px] flex-1 flex flex-col">
      <div className="flex justify-between items-start h-[27px] pr-[9px]">
        <span className="leading-[14px] pt-[1px]">Units</span>
        <Combo text="mm" cls="w-[60px] h-[27px]" />
      </div>
      <DRow label="Base diameter:" value="200.000" w={125} mt="mt-[5px]" />
      <DRow label="Cut diameter:" value="80.000" w={125} />
      <DRow label="Cone Height:" value="180.000" w={125} />
      <DRow label="Line thickness (in units):" value="1.10" w={117} />
      <div className="flex items-center h-[16px] mt-[8px] pl-[4px] gap-[8px]"><Check on /><span>Draw dimensions.</span></div>
      <div className="pl-[12px] mt-[6px] text-[12.9px] leading-[15px] whitespace-nowrap">
        <div>Constructs a flat pattern projection (sheet cutting layout)</div>
        <div>that can be rolled or bent into a cone or frustum</div>
        <div>(truncated cone).</div>
        <div>If Cut diameter=0 then cone will not be truncated.</div>
      </div>
      <div className="flex gap-[2px] mt-[6px] pl-[4px]">
        <Tab on>RGB</Tab><Tab>HSL</Tab><Tab>CMYK</Tab><Tab>Wheel</Tab>
      </div>
      <div className="flex flex-col gap-[4px] mt-[9px] pl-[3px]">
        <CRow l="R" rest=":" val="255" markSide="right-0" dimUp bar={<div className="w-full h-full bg-[linear-gradient(to_right,#000,#f00)]" />} />
        <CRow l="G" rest=":" val="0" markSide="left-0" dimDown bar={<div className="w-full h-full bg-[linear-gradient(to_right,#f00,#ff0)]" />} />
        <CRow l="B" rest=":" val="0" markSide="left-0" dimDown bar={<div className="w-full h-full bg-[linear-gradient(to_right,#f00,#f0f)]" />} />
        <CRow l="A" rest=":" val="0" markSide="left-0" dimDown bar={
          <div className="w-full h-full bg-[repeating-conic-gradient(#666_0_25%,#aaa_0_50%)] bg-size-[16px_16px]">
            <div className="w-full h-full bg-[linear-gradient(to_right,rgba(255,0,0,0),#f00)]" />
          </div>
        } />
      </div>
      <div className="flex items-center h-[21px] mt-[36px] pl-[13px] pr-[14px]">
        <svg width="18" height="20" viewBox="0 0 18 20" className="block"><path d="M2 18 L2 15 L10 6 L13 9 L4 18 Z" fill="#c8d4de" stroke="#567" /><path d="M9 5 L13 1 Q16 0 17 2 Q17 5 14 6 L12 8 Z" fill="#111" /></svg>
        <span className="flex-1 text-right text-[12px] pr-[3px]">RGBA<U>:</U></span>
        <div className="w-[63px] h-[20px] bg-white border-t border-l border-t-black border-l-black border-b border-r border-b-[#f4f4f0] border-r-[#f4f4f0] pl-[3px] text-[12px] leading-[18px]">ff000000</div>
      </div>
    </div>
    <div className="shrink-0">
      <DSep />
      <div className="h-[37px] flex items-center pl-[12px] gap-[8px] pt-[4px]"><Check /><span>Live preview</span></div>
      <DSep />
      <div className="h-[47px] flex justify-end gap-[5px] pt-[5px] pr-[8px]">
        <div className="w-[85px] h-[34px] flex items-center justify-center gap-[5px] border-t border-l border-t-white border-l-white border-b-2 border-r-2 border-b-[#444] border-r-[#444]">
          <svg width="16" height="16" viewBox="0 0 16 16" className="block"><rect width="16" height="16" fill="#f58a2a" /><path d="M3 3 L13 13 M13 3 L3 13" stroke="#fff" strokeWidth="3" /></svg>
          <span><U>C</U>lose</span>
        </div>
        <div className="w-[85px] h-[34px] flex items-center justify-center gap-[4px] border-2 border-[#111] border-t-[#222] border-l-[#222]">
          <svg width="20" height="20" viewBox="0 0 20 20" className="block"><circle cx="10" cy="10" r="9" fill="#6cb82a" stroke="#4a9020" /><path d="M4 8 H11 V4 L17 10 L11 16 V12 H4 Z" fill="#e8e8d8" /></svg>
          <span><U>A</U>pply</span>
        </div>
      </div>
    </div>
  </div>
);

export default function App() {
  return (
    <div className={`relative w-[1920px] h-[1056px] overflow-hidden flex flex-col bg-[#dbdad5] ${F}`}>
      <Defs />
      <Title />
      <MenuBar />
      <Toolbar />
      <Main />
      <Palette />
      <PalScroll />
      <Status />
      <Menu />
      <Submenu />
      <Dialog />
    </div>
  );
}
